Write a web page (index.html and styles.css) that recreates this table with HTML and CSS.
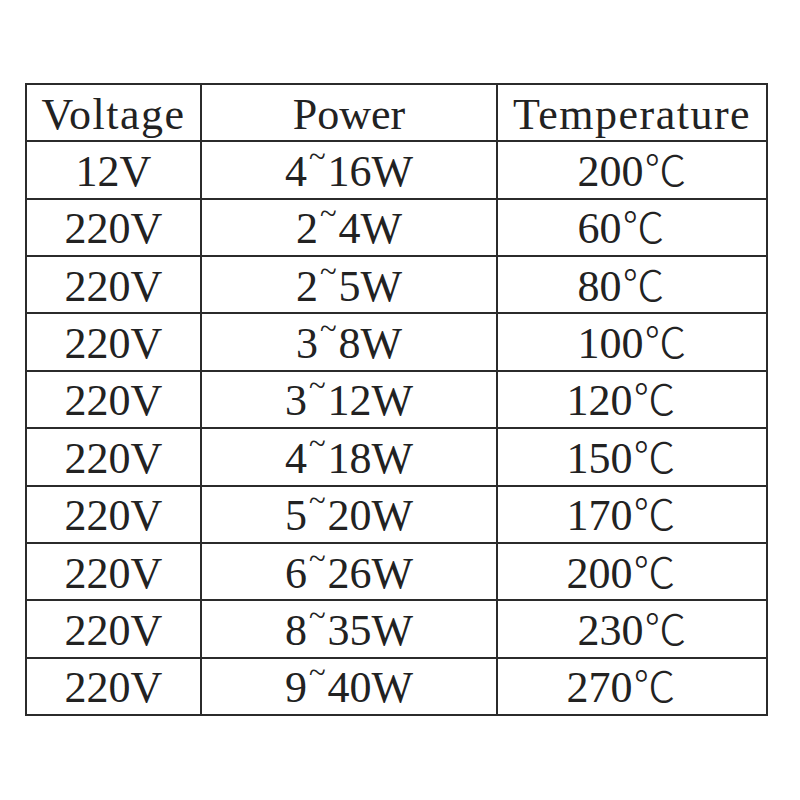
FILE: index.html
```html
<!DOCTYPE html>
<html>
<head>
<meta charset="utf-8">
<link rel="stylesheet" href="styles.css">
</head>
<body>
<table class="spec">
<colgroup><col class="c1"><col class="c2"><col class="c3"></colgroup>
<tr><th class="wide">Voltage</th><th>Power</th><th class="wide">Temperature</th></tr>
<tr><td>12V</td><td>4<span class="tl">~</span>16W</td><td>200<span class="dg">℃</span></td></tr>
<tr><td>220V</td><td>2<span class="tl">~</span>4W</td><td class="sh">60<span class="dg">℃</span></td></tr>
<tr><td>220V</td><td>2<span class="tl">~</span>5W</td><td class="sh">80<span class="dg">℃</span></td></tr>
<tr><td>220V</td><td>3<span class="tl">~</span>8W</td><td>100<span class="dg">℃</span></td></tr>
<tr><td>220V</td><td>3<span class="tl">~</span>12W</td><td class="sh">120<span class="dg">℃</span></td></tr>
<tr><td>220V</td><td>4<span class="tl">~</span>18W</td><td class="sh">150<span class="dg">℃</span></td></tr>
<tr><td>220V</td><td>5<span class="tl">~</span>20W</td><td class="sh">170<span class="dg">℃</span></td></tr>
<tr><td>220V</td><td>6<span class="tl">~</span>26W</td><td class="sh">200<span class="dg">℃</span></td></tr>
<tr><td>220V</td><td>8<span class="tl">~</span>35W</td><td>230<span class="dg">℃</span></td></tr>
<tr><td>220V</td><td>9<span class="tl">~</span>40W</td><td class="sh">270<span class="dg">℃</span></td></tr>
</table>
</body>
</html>
```
FILE: styles.css
```css
html, body {
  margin: 0;
  padding: 0;
  background: #fff;
}
body {
  padding: 83px 0 0 25px;
}
.spec {
  border-collapse: collapse;
  table-layout: fixed;
  width: 741px;
  font-family: "Liberation Serif", "Times New Roman", serif;
  font-size: 44px;
  color: #222;
}
.c1 { width: 175px; }
.c2 { width: 296px; }
.c3 { width: 270px; }
.spec th, .spec td {
  border: 2px solid #2b2b2b;
  height: 51.36px;
  padding: 4px 0 0 0;
  text-align: center;
  font-weight: normal;
  line-height: 1;
  white-space: nowrap;
}
.spec th.wide {
  letter-spacing: 1.5px;
}
.spec td.sh {
  padding-right: 22px;
}
.tl {
  display: inline-block;
  vertical-align: top;
  line-height: 0.5;
  font-size: 0.7em;
  margin: 0 2px;
}
.dg {
  font-family: "Noto Sans CJK SC", "Noto Sans CJK JP", sans-serif;
  font-weight: 300;
  font-size: 0.95em;
  line-height: 0.7;
  margin-left: 1px;
}
```
